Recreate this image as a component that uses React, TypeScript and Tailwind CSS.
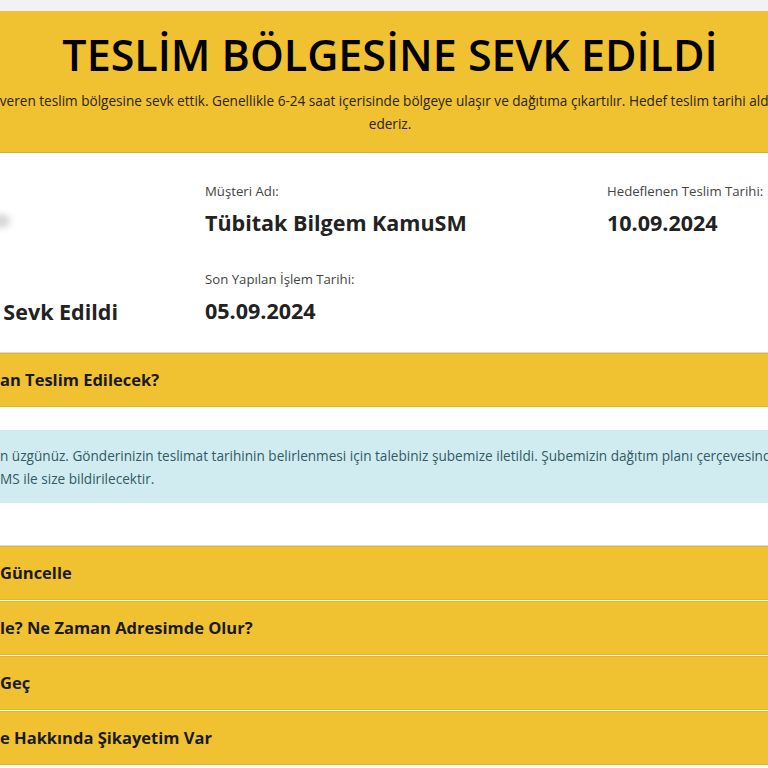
import React from "react";

const font = { fontFamily: '"Open Sans", "Noto Sans", sans-serif' };

function Clip({ prefix, text, w }: { prefix: string; text: string; w: string }) {
  return (
    <div className="flex whitespace-nowrap">
      <span className={`${w} shrink-0 flex justify-end`}>{prefix}</span>
      <span>{text}</span>
    </div>
  );
}

function AccRow({ prefix, text }: { prefix: string; text: string }) {
  return (
    <div className="h-[54px] bg-[#f0c232] border-y border-[#e2b52a] flex items-center pl-[60px] mb-px">
      <div className="text-[16.5px] font-bold text-[#1a1a1a]">
        <Clip prefix={prefix} text={text} w="w-[150px]" />
      </div>
    </div>
  );
}

const label = "text-[13.2px] text-[#444] leading-[20px] whitespace-nowrap";
const value = "mt-[8px] text-[21.5px] font-bold text-[#222] leading-[28px] whitespace-nowrap";

export default function App() {
  return (
    <div className="w-[768px] h-[768px] overflow-hidden bg-white" style={font}>
      <div className="w-[1200px] ml-[-210px]">
        <div className="h-[11px] bg-[#f1f2f4]" />
        <div className="bg-[#f0c232] h-[142px] border-b border-[#d9ae2a] flex flex-col items-center pt-[14px]">
          <h1 className="text-[43px] leading-[60px] font-semibold text-black">
            TESLİM BÖLGESİNE SEVK EDİLDİ
          </h1>
          <p className="mt-[4px] text-[13.6px] leading-[23px] text-[#2a2410] text-center whitespace-nowrap">
            Gönderinizi, bölgenizdeki hizmet veren teslim bölgesine sevk ettik. Genellikle 6-24 saat içerisinde bölgeye ulaşır ve dağıtıma çıkartılır. Hedef teslim tarihi aldığınızda sizi bilgilendirmeyi taahhüt
            <br />
            ederiz.
          </p>
        </div>

        <div className="h-[199px] grid grid-cols-[402px_402px_1fr] pl-[13px] pt-[28px]">
          <div className="flex flex-col">
            <div className={label}>Gönderi Takip No:</div>
            <div className="mt-[6px] h-[28px] flex items-center justify-end pr-[195px]">
              <div className="w-[20px] h-[14px] rounded-full bg-[#d8d8d8] blur-[3px]" />
            </div>
            <div className={`mt-[35px] ${label}`}>Gönderi Durumu:</div>
            <div className={`${value} text-right pr-[87px]`}>Teslim Bölgesine Sevk Edildi</div>
          </div>
          <div className="flex flex-col">
            <div className={label}>Müşteri Adı:</div>
            <div className={value}>Tübitak Bilgem KamuSM</div>
            <div className={`mt-[32px] ${label}`}>Son Yapılan İşlem Tarihi:</div>
            <div className={value}>05.09.2024</div>
          </div>
          <div className="flex flex-col">
            <div className={label}>Hedeflenen Teslim Tarihi:</div>
            <div className={value}>10.09.2024</div>
          </div>
        </div>

        <div className="border-t border-[#dcdcdc]">
          <AccRow prefix="Gönderim Ne Zam" text="an Teslim Edilecek?" />
        </div>
        <div className="pt-[22px] pb-[42px]">
          <div className="bg-[#d1ecf1] h-[73px] pl-[74px] pt-[14px] text-[13.6px] leading-[23px] text-[#315a63]">
            <Clip
              w="w-[136px]"
              prefix="Yaşanan gecikme içi"
              text="n üzgünüz. Gönderinizin teslimat tarihinin belirlenmesi için talebiniz şubemize iletildi. Şubemizin dağıtım planı çerçevesinde belirlenen tarih"
            />
            <Clip w="w-[136px]" prefix="Yeni teslim tarihiniz S" text="MS ile size bildirilecektir." />
          </div>
        </div>
        <div className="border-t border-[#dcdcdc]">
          <AccRow prefix={"Adres Bilgilerimi\u00a0"} text="Güncelle" />
          <AccRow prefix="Gönderim Neden Gecik" text="le? Ne Zaman Adresimde Olur?" />
          <AccRow prefix={"Bizimle İletişime\u00a0"} text="Geç" />
          <AccRow prefix="Gönderi / Kury" text="e Hakkında Şikayetim Var" />
        </div>
      </div>
    </div>
  );
}
